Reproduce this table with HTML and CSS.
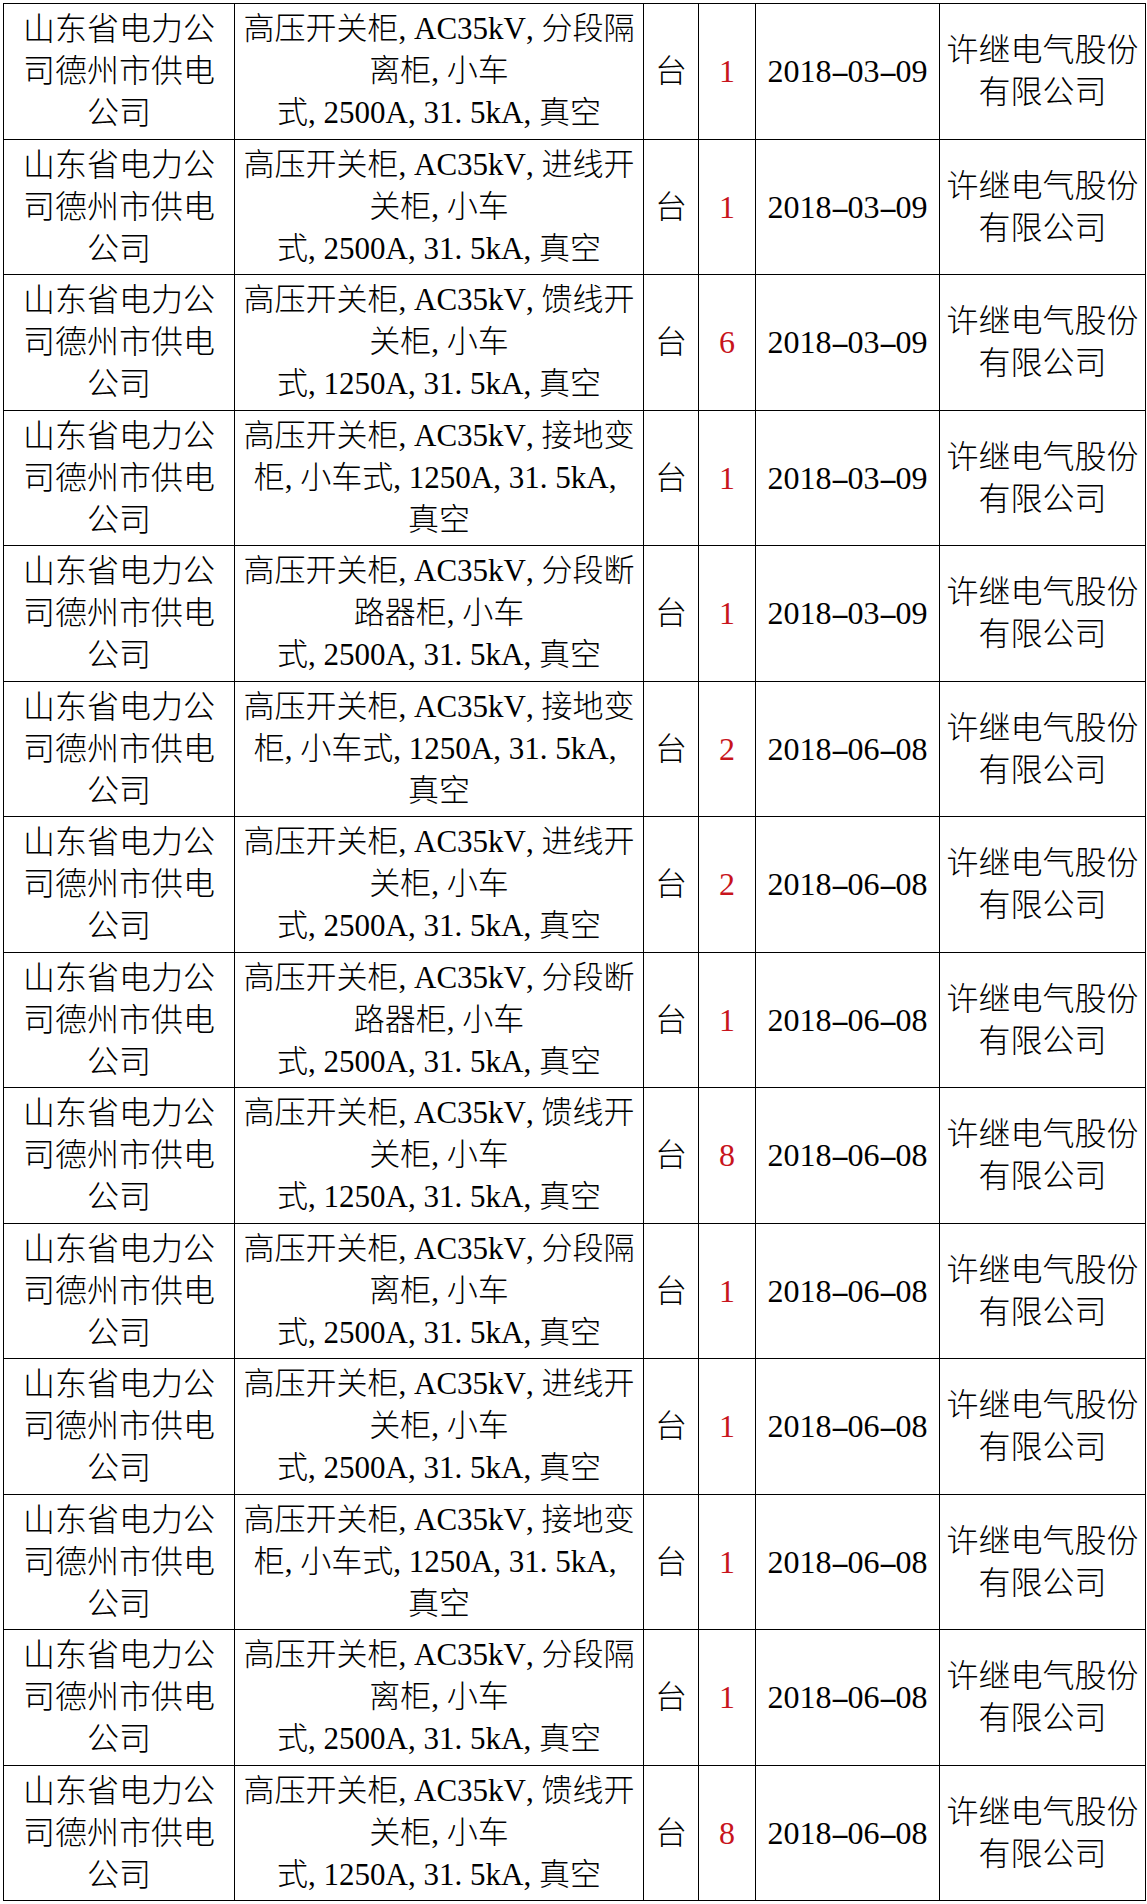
FILE: index.html
```html
<!DOCTYPE html>
<html lang="zh-CN">
<head>
<meta charset="utf-8">
<title>设备清单</title>
<link rel="stylesheet" href="styles.css">
</head>
<body>
<table class="t">
<colgroup><col class="c1"><col class="c2"><col class="c3"><col class="c4"><col class="c5"><col class="c6"></colgroup>
<tbody>
<tr>
<td class="org">山东省电力公<br>司德州市供电<br>公司</td>
<td class="desc">高压开关柜<span class="p">,</span>AC35kV<span class="p">,</span>分段隔<br>离柜<span class="p">,</span>小车<br>式<span class="p">,</span>2500A<span class="p">,</span>31<span class="p">.</span>5kA<span class="p">,</span>真空</td>
<td class="unit">台</td>
<td class="qty">1</td>
<td class="date">2018<span class="h">-</span>03<span class="h">-</span>09</td>
<td class="sup">许继电气股份<br>有限公司</td>
</tr>
<tr>
<td class="org">山东省电力公<br>司德州市供电<br>公司</td>
<td class="desc">高压开关柜<span class="p">,</span>AC35kV<span class="p">,</span>进线开<br>关柜<span class="p">,</span>小车<br>式<span class="p">,</span>2500A<span class="p">,</span>31<span class="p">.</span>5kA<span class="p">,</span>真空</td>
<td class="unit">台</td>
<td class="qty">1</td>
<td class="date">2018<span class="h">-</span>03<span class="h">-</span>09</td>
<td class="sup">许继电气股份<br>有限公司</td>
</tr>
<tr>
<td class="org">山东省电力公<br>司德州市供电<br>公司</td>
<td class="desc">高压开关柜<span class="p">,</span>AC35kV<span class="p">,</span>馈线开<br>关柜<span class="p">,</span>小车<br>式<span class="p">,</span>1250A<span class="p">,</span>31<span class="p">.</span>5kA<span class="p">,</span>真空</td>
<td class="unit">台</td>
<td class="qty">6</td>
<td class="date">2018<span class="h">-</span>03<span class="h">-</span>09</td>
<td class="sup">许继电气股份<br>有限公司</td>
</tr>
<tr>
<td class="org">山东省电力公<br>司德州市供电<br>公司</td>
<td class="desc">高压开关柜<span class="p">,</span>AC35kV<span class="p">,</span>接地变<br>柜<span class="p">,</span>小车式<span class="p">,</span>1250A<span class="p">,</span>31<span class="p">.</span>5kA<span class="p">,</span><br>真空</td>
<td class="unit">台</td>
<td class="qty">1</td>
<td class="date">2018<span class="h">-</span>03<span class="h">-</span>09</td>
<td class="sup">许继电气股份<br>有限公司</td>
</tr>
<tr>
<td class="org">山东省电力公<br>司德州市供电<br>公司</td>
<td class="desc">高压开关柜<span class="p">,</span>AC35kV<span class="p">,</span>分段断<br>路器柜<span class="p">,</span>小车<br>式<span class="p">,</span>2500A<span class="p">,</span>31<span class="p">.</span>5kA<span class="p">,</span>真空</td>
<td class="unit">台</td>
<td class="qty">1</td>
<td class="date">2018<span class="h">-</span>03<span class="h">-</span>09</td>
<td class="sup">许继电气股份<br>有限公司</td>
</tr>
<tr>
<td class="org">山东省电力公<br>司德州市供电<br>公司</td>
<td class="desc">高压开关柜<span class="p">,</span>AC35kV<span class="p">,</span>接地变<br>柜<span class="p">,</span>小车式<span class="p">,</span>1250A<span class="p">,</span>31<span class="p">.</span>5kA<span class="p">,</span><br>真空</td>
<td class="unit">台</td>
<td class="qty">2</td>
<td class="date">2018<span class="h">-</span>06<span class="h">-</span>08</td>
<td class="sup">许继电气股份<br>有限公司</td>
</tr>
<tr>
<td class="org">山东省电力公<br>司德州市供电<br>公司</td>
<td class="desc">高压开关柜<span class="p">,</span>AC35kV<span class="p">,</span>进线开<br>关柜<span class="p">,</span>小车<br>式<span class="p">,</span>2500A<span class="p">,</span>31<span class="p">.</span>5kA<span class="p">,</span>真空</td>
<td class="unit">台</td>
<td class="qty">2</td>
<td class="date">2018<span class="h">-</span>06<span class="h">-</span>08</td>
<td class="sup">许继电气股份<br>有限公司</td>
</tr>
<tr>
<td class="org">山东省电力公<br>司德州市供电<br>公司</td>
<td class="desc">高压开关柜<span class="p">,</span>AC35kV<span class="p">,</span>分段断<br>路器柜<span class="p">,</span>小车<br>式<span class="p">,</span>2500A<span class="p">,</span>31<span class="p">.</span>5kA<span class="p">,</span>真空</td>
<td class="unit">台</td>
<td class="qty">1</td>
<td class="date">2018<span class="h">-</span>06<span class="h">-</span>08</td>
<td class="sup">许继电气股份<br>有限公司</td>
</tr>
<tr>
<td class="org">山东省电力公<br>司德州市供电<br>公司</td>
<td class="desc">高压开关柜<span class="p">,</span>AC35kV<span class="p">,</span>馈线开<br>关柜<span class="p">,</span>小车<br>式<span class="p">,</span>1250A<span class="p">,</span>31<span class="p">.</span>5kA<span class="p">,</span>真空</td>
<td class="unit">台</td>
<td class="qty">8</td>
<td class="date">2018<span class="h">-</span>06<span class="h">-</span>08</td>
<td class="sup">许继电气股份<br>有限公司</td>
</tr>
<tr>
<td class="org">山东省电力公<br>司德州市供电<br>公司</td>
<td class="desc">高压开关柜<span class="p">,</span>AC35kV<span class="p">,</span>分段隔<br>离柜<span class="p">,</span>小车<br>式<span class="p">,</span>2500A<span class="p">,</span>31<span class="p">.</span>5kA<span class="p">,</span>真空</td>
<td class="unit">台</td>
<td class="qty">1</td>
<td class="date">2018<span class="h">-</span>06<span class="h">-</span>08</td>
<td class="sup">许继电气股份<br>有限公司</td>
</tr>
<tr>
<td class="org">山东省电力公<br>司德州市供电<br>公司</td>
<td class="desc">高压开关柜<span class="p">,</span>AC35kV<span class="p">,</span>进线开<br>关柜<span class="p">,</span>小车<br>式<span class="p">,</span>2500A<span class="p">,</span>31<span class="p">.</span>5kA<span class="p">,</span>真空</td>
<td class="unit">台</td>
<td class="qty">1</td>
<td class="date">2018<span class="h">-</span>06<span class="h">-</span>08</td>
<td class="sup">许继电气股份<br>有限公司</td>
</tr>
<tr>
<td class="org">山东省电力公<br>司德州市供电<br>公司</td>
<td class="desc">高压开关柜<span class="p">,</span>AC35kV<span class="p">,</span>接地变<br>柜<span class="p">,</span>小车式<span class="p">,</span>1250A<span class="p">,</span>31<span class="p">.</span>5kA<span class="p">,</span><br>真空</td>
<td class="unit">台</td>
<td class="qty">1</td>
<td class="date">2018<span class="h">-</span>06<span class="h">-</span>08</td>
<td class="sup">许继电气股份<br>有限公司</td>
</tr>
<tr>
<td class="org">山东省电力公<br>司德州市供电<br>公司</td>
<td class="desc">高压开关柜<span class="p">,</span>AC35kV<span class="p">,</span>分段隔<br>离柜<span class="p">,</span>小车<br>式<span class="p">,</span>2500A<span class="p">,</span>31<span class="p">.</span>5kA<span class="p">,</span>真空</td>
<td class="unit">台</td>
<td class="qty">1</td>
<td class="date">2018<span class="h">-</span>06<span class="h">-</span>08</td>
<td class="sup">许继电气股份<br>有限公司</td>
</tr>
<tr>
<td class="org">山东省电力公<br>司德州市供电<br>公司</td>
<td class="desc">高压开关柜<span class="p">,</span>AC35kV<span class="p">,</span>馈线开<br>关柜<span class="p">,</span>小车<br>式<span class="p">,</span>1250A<span class="p">,</span>31<span class="p">.</span>5kA<span class="p">,</span>真空</td>
<td class="unit">台</td>
<td class="qty">8</td>
<td class="date">2018<span class="h">-</span>06<span class="h">-</span>08</td>
<td class="sup">许继电气股份<br>有限公司</td>
</tr>
</tbody>
</table>
</body>
</html>
```

FILE: styles.css
```css
html, body {
  background: #fff;
}
body {
  margin: 0;
  padding: 3px 0 0 3px;
}
.t {
  border-collapse: collapse;
  table-layout: fixed;
  width: 1142px;
  font-family: "Liberation Serif", "Noto Sans CJK SC", serif;
  font-weight: 300;
  font-size: 32px;
  line-height: 42px;
  color: #000;
}
.c1 { width: 231px; }
.c2 { width: 409px; }
.c3 { width: 55px; }
.c4 { width: 57px; }
.c5 { width: 184px; }
.c6 { width: 206px; }
.t tr {
  height: 135.5px;
}
.t td {
  border: 1px solid #000;
  padding: 0;
  text-align: center;
  vertical-align: middle;
  white-space: nowrap;
}
.desc {
  font-size: 31px;
}
.qty {
  color: #c8141c;
}
.p {
  display: inline-block;
  width: 0.5em;
  text-align: left;
}
.h {
  display: inline-block;
  width: 0.5em;
  text-align: center;
  transform: scaleX(1.8);
}
```
